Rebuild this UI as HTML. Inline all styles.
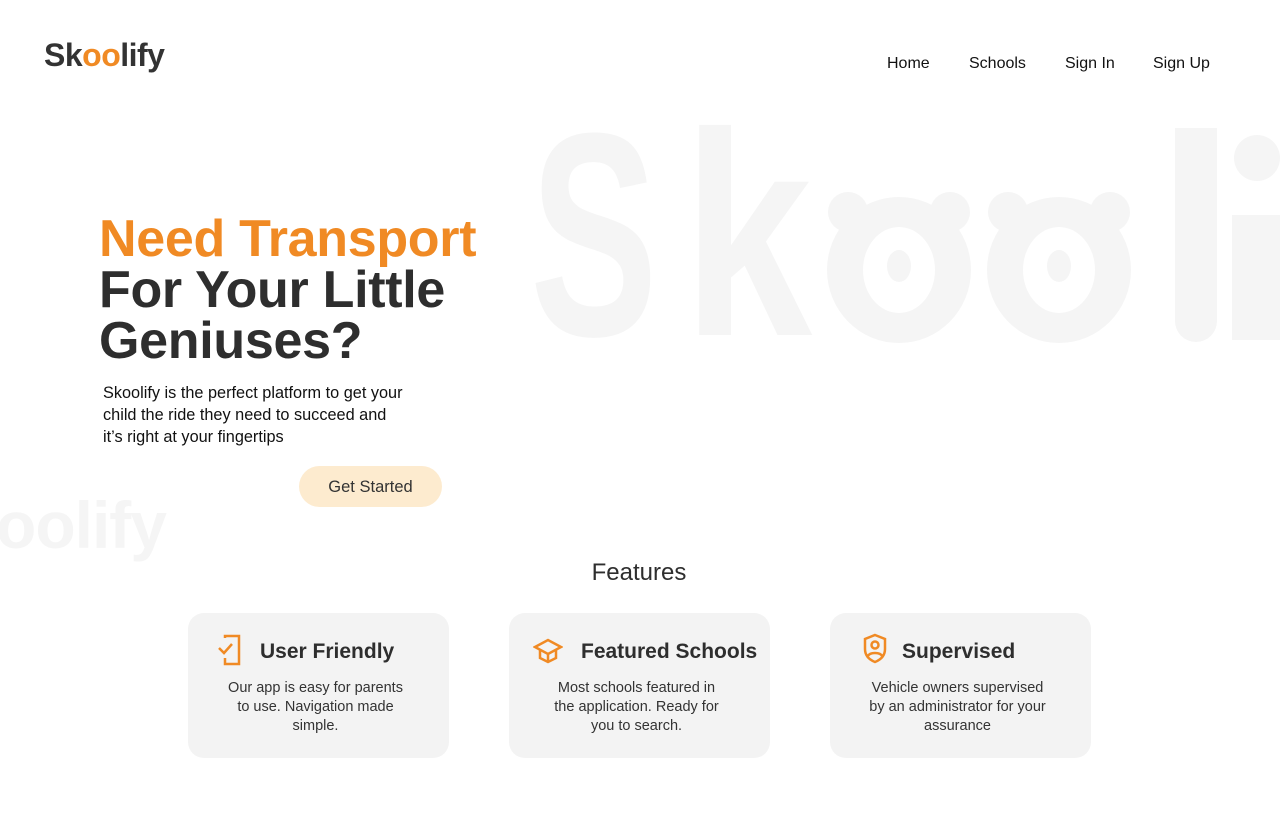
<!DOCTYPE html>
<html><head><style>
*{margin:0;padding:0;box-sizing:border-box}
html,body{width:1280px;height:832px;overflow:hidden}
body{background:#fff;font-family:"Liberation Sans",sans-serif;position:relative;color:#2e2e2e}
.abs{position:absolute}
.wm{position:absolute;color:#f5f5f5;font-weight:bold;white-space:nowrap;line-height:1}
nav a{position:absolute;top:55px;font-size:16px;color:#111;text-decoration:none}
.card{position:absolute;top:613px;width:261px;height:145px;background:#f3f3f3;border-radius:16px}
.card h3{position:absolute;top:27px;font-size:21px;font-weight:bold;color:#2e2e2e;white-space:nowrap}
.card p{position:absolute;top:66px;left:-3px;width:100%;text-align:center;font-size:14.5px;line-height:19px;color:#333;white-space:nowrap}
.card svg{position:absolute;top:21px}
</style></head><body>
<div style="position:absolute;left:0;top:0;width:1280px;height:832px;overflow:hidden">
<div class="wm" style="left:530px;top:90px;font-size:290px;transform:scaleX(0.66);transform-origin:left top">S</div>
<div class="wm" style="left:683px;top:90px;font-size:290px;transform:scaleX(0.8);transform-origin:left top">k</div>
<div class="abs" style="left:1175px;top:128px;width:42px;height:214px;background:#f5f5f5;border-radius:0 0 21px 21px"></div>
<div class="abs" style="left:1232px;top:215px;width:48px;height:125px;background:#f5f5f5"></div>
<div class="abs" style="left:1234px;top:135px;width:46px;height:46px;border-radius:50%;background:#f5f5f5"></div>
<svg class="abs" style="left:820px;top:190px" width="320" height="160" viewBox="0 0 320 160">
<g fill="#f5f5f5"><circle cx="28" cy="22" r="20"/><circle cx="130" cy="22" r="20"/><ellipse cx="79" cy="80" rx="72" ry="73"/>
<circle cx="188" cy="22" r="20"/><circle cx="290" cy="22" r="20"/><ellipse cx="239" cy="80" rx="72" ry="73"/></g>
<g fill="#fff"><ellipse cx="79" cy="80" rx="36" ry="43"/><ellipse cx="239" cy="80" rx="36" ry="43"/></g>
<g fill="#f5f5f5"><ellipse cx="79" cy="76" rx="12" ry="16"/><ellipse cx="239" cy="76" rx="12" ry="16"/></g>
</svg>
<div class="wm" style="left:-4px;top:492px;font-size:66px;letter-spacing:-1px">oolify</div>
</div>

<div class="abs" style="left:44px;top:37px;font-size:32px;font-weight:bold;color:#333;letter-spacing:-0.5px">Sk<span style="color:#f08a24">oo</span>lify</div>
<nav><a style="left:887px">Home</a><a style="left:969px">Schools</a><a style="left:1065px">Sign In</a><a style="left:1153px">Sign Up</a></nav>

<div class="abs" style="left:99px;top:214px;font-size:52px;font-weight:bold;line-height:51px;color:#2e2e2e;letter-spacing:-0.3px;white-space:nowrap"><span style="color:#f08a24">Need Transport</span><br>For Your Little<br>Geniuses?</div>
<div class="abs" style="left:103px;top:382px;font-size:16.3px;line-height:22px;color:#111;white-space:nowrap">Skoolify is the perfect platform to get your<br>child the ride they need to succeed and<br>it’s right at your fingertips</div>
<div class="abs" style="left:299px;top:466px;width:143px;height:41px;border-radius:21px;background:#fdebcf;text-align:center;line-height:42px;font-size:16.5px;color:#333">Get Started</div>

<div class="abs" style="left:0;width:1278px;top:559px;text-align:center;font-size:24px;color:#2e2e2e">Features</div>

<div class="card" style="left:188px">
<svg style="left:28px" width="28" height="32" viewBox="0 0 28 32" fill="none" stroke="#f08a24" stroke-width="2.5"><path d="M9 4V2h14v28H9v-6"/><path d="M3 14l5 5 8-9"/></svg>
<h3 style="left:72px">User Friendly</h3>
<p>Our app is easy for parents<br>to use. Navigation made<br>simple.</p></div>
<div class="card" style="left:509px">
<svg style="left:24px;top:24px" width="30" height="28" viewBox="0 0 30 28" fill="none" stroke="#f08a24" stroke-width="2.5"><path d="M2 10L15 3l13 7-13 7z"/><path d="M7 13v8l8 4 8-4v-8"/><path d="M15 17v8"/></svg>
<h3 style="left:72px">Featured Schools</h3>
<p>Most schools featured in<br>the application. Ready for<br>you to search.</p></div>
<div class="card" style="left:830px">
<svg style="left:32px;top:20px" width="26" height="32" viewBox="0 0 26 32" fill="none" stroke="#f08a24" stroke-width="2.5"><path d="M13 2l10 4v10c0 7-5 11-10 13C8 27 3 23 3 16V6z"/><circle cx="13" cy="12" r="3.5"/><path d="M6 23c2-4 12-4 14 0"/></svg>
<h3 style="left:72px">Supervised</h3>
<p>Vehicle owners supervised<br>by an administrator for your<br>assurance</p></div>
</body></html>
